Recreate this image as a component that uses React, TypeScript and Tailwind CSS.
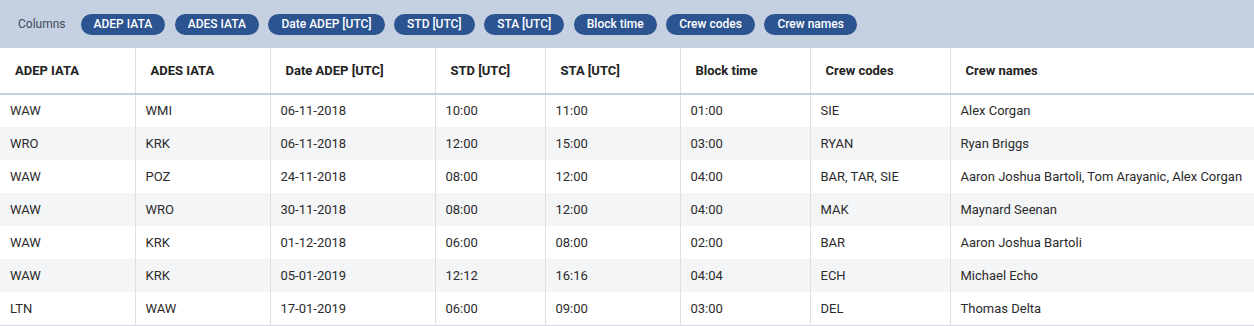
import React from "react";

const columns = [
  { label: "ADEP IATA", width: "w-[135px]" },
  { label: "ADES IATA", width: "w-[135px]" },
  { label: "Date ADEP [UTC]", width: "w-[165px]" },
  { label: "STD [UTC]", width: "w-[110px]" },
  { label: "STA [UTC]", width: "w-[135px]" },
  { label: "Block time", width: "w-[130px]" },
  { label: "Crew codes", width: "w-[140px]" },
  { label: "Crew names", width: "" },
];

const rows = [
  ["WAW", "WMI", "06-11-2018", "10:00", "11:00", "01:00", "SIE", "Alex Corgan"],
  ["WRO", "KRK", "06-11-2018", "12:00", "15:00", "03:00", "RYAN", "Ryan Briggs"],
  ["WAW", "POZ", "24-11-2018", "08:00", "12:00", "04:00", "BAR, TAR, SIE", "Aaron Joshua Bartoli, Tom Arayanic, Alex Corgan"],
  ["WAW", "WRO", "30-11-2018", "08:00", "12:00", "04:00", "MAK", "Maynard Seenan"],
  ["WAW", "KRK", "01-12-2018", "06:00", "08:00", "02:00", "BAR", "Aaron Joshua Bartoli"],
  ["WAW", "KRK", "05-01-2019", "12:12", "16:16", "04:04", "ECH", "Michael Echo"],
  ["LTN", "WAW", "17-01-2019", "06:00", "09:00", "03:00", "DEL", "Thomas Delta"],
];

export default function App() {
  return (
    <div className="w-[1254px] h-[326px] bg-white font-['Roboto',sans-serif] overflow-hidden">
      {/* Column toggles */}
      <div className="h-[48px] bg-[#c5d1e1] flex items-center pl-[18px] gap-[9.5px]">
        <span className="text-[12px] text-[#3f4a5a] mr-[5.5px]">Columns</span>
        {columns.map((c) => (
          <span
            key={c.label}
            className="h-[21px] px-[13px] rounded-full bg-[#2c5491] text-white text-[12px] font-medium flex items-center"
          >
            {c.label}
          </span>
        ))}
      </div>

      <table className="w-full table-fixed border-collapse text-[13px] text-[#2b2b2b]">
        <thead>
          <tr className="h-[46px] border-b-2 border-[#c5d1e1]">
            {columns.map((c, i) => (
              <th
                key={c.label}
                className={`${c.width} text-left font-bold pl-[15px] text-[#222] ${i < columns.length - 1 ? "border-r border-[#e0e0e0]" : ""}`}
              >
                {c.label}
              </th>
            ))}
          </tr>
        </thead>
        <tbody>
          {rows.map((r, ri) => (
            <tr key={ri} className={`h-[33px] ${ri % 2 === 1 ? "bg-[#f4f5f7]" : "bg-white"} ${ri === rows.length - 1 ? "border-b border-[#d4d8de]" : ""}`}>
              {r.map((v, ci) => (
                <td
                  key={ci}
                  className={`pl-[10px] whitespace-nowrap ${ci < r.length - 1 ? "border-r border-[#e0e0e0]" : ""}`}
                >
                  {v}
                </td>
              ))}
            </tr>
          ))}
        </tbody>
      </table>
    </div>
  );
}
